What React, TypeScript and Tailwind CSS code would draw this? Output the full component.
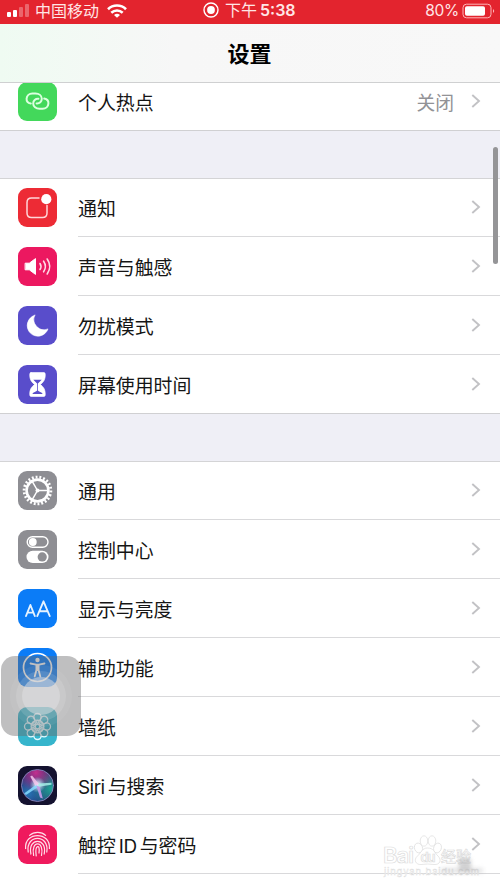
import type { ReactNode } from 'react'

// Icon tiles, all drawn on a 39x39 grid

function Tile({ className, children }: { className: string; children: ReactNode }) {
  return (
    <div className={`w-[39px] h-[39px] rounded-[9px] overflow-hidden flex-shrink-0 ${className}`}>
      <svg viewBox="0 0 39 39" className="w-full h-full" fill="none" stroke="white" strokeLinecap="round" strokeLinejoin="round">
        {children}
      </svg>
    </div>
  )
}

function HotspotIcon() {
  return (
    <Tile className="bg-[#43d85b]">
      <g stroke="#dcffe0" strokeWidth="2">
        <path d="M12.8 21.6 C10 21 8.4 19 8.6 16.6 C8.8 13.6 11.2 11.4 14.4 11.4 H17.5 C21 11.4 23.8 13.6 23.8 16.8 C23.8 19.6 21.6 21.6 18.6 21.4" />
        <path d="M26.2 16.6 C29 17.2 30.6 19.2 30.4 21.6 C30.2 24.6 27.8 26.8 24.6 26.8 H21.5 C18 26.8 15.2 24.6 15.2 21.4 C15.2 18.6 17.4 16.6 20.4 16.8" />
      </g>
    </Tile>
  )
}

function NotificationIcon() {
  return (
    <Tile className="bg-[#ed2b35]">
      <path d="M21 10 H13.5 Q9 10 9 14.5 V25 Q9 29.5 13.5 29.5 H24.5 Q29 29.5 29 25 V17.5" stroke="#ffd6d8" strokeWidth="1.5" />
      <circle cx="28.3" cy="11.2" r="5.1" fill="white" stroke="none" />
    </Tile>
  )
}

function SoundIcon() {
  return (
    <Tile className="bg-[#ec1860]">
      <path d="M7.5 16.2 H11.3 L17.5 11.6 V27.4 L11.3 22.8 H7.5 Z" fill="white" strokeWidth="1" />
      <g stroke="#ffd9e5" strokeWidth="1.6">
        <path d="M22 16.5 Q24 19.5 22 22.5" />
        <path d="M25.6 14.2 Q29.2 19.5 25.6 24.8" />
        <path d="M29.2 12 Q34.3 19.5 29.2 27" />
      </g>
    </Tile>
  )
}

function MoonIcon() {
  return (
    <Tile className="bg-[#594dcb]">
      <path d="M16.8 9.2 A10.7 10.7 0 1 0 30 22.9 A10.2 10.2 0 0 1 16.8 9.2 Z" fill="white" strokeWidth=".6" />
    </Tile>
  )
}

function HourglassIcon() {
  return (
    <Tile className="bg-[#594dcb]">
      <path d="M13 7.5 H26 Q27.3 7.5 27.3 9.5 C27.3 14.5 26 16.5 22.5 19.5 C26 22.5 27.3 24.5 27.3 29.5 Q27.3 31.5 26 31.5 H13 Q11.7 31.5 11.7 29.5 C11.7 24.5 13 22.5 16.5 19.5 C13 16.5 11.7 14.5 11.7 9.5 Q11.7 7.5 13 7.5 Z" fill="white" strokeWidth=".6" />
      <path d="M15.3 14.7 H23.7 L19.9 18.6 V25.5 C20.5 26.5 24 27.2 24.7 28.9 H14.3 C15 27.2 18.5 26.5 19.1 25.5 V18.6 Z" fill="#594dcb" stroke="none" />
    </Tile>
  )
}

function GearIcon() {
  return (
    <Tile className="bg-[#8e8e93]">
      <circle cx="19.5" cy="19.5" r="13.4" strokeWidth="2.8" strokeLinecap="butt" pathLength="88" strokeDasharray="2 2" />
      <circle cx="19.5" cy="19.5" r="10.9" strokeWidth="2.6" />
      <circle cx="19.5" cy="19.5" r="2" fill="white" stroke="none" />
      <path d="M19.5 19.5 H30 M19.5 19.5 L14.4 10.6 M19.5 19.5 L14.4 28.4" strokeWidth="1.5" />
    </Tile>
  )
}

function ControlCenterIcon() {
  return (
    <Tile className="bg-[#8e8e93]">
      <rect x="9.2" y="6.7" width="20.8" height="10.6" rx="5.3" strokeWidth="1.4" />
      <circle cx="14.8" cy="12" r="3.9" fill="white" stroke="none" />
      <rect x="8.5" y="20.7" width="22" height="12.4" rx="6.2" fill="white" stroke="none" />
      <circle cx="24.2" cy="26.9" r="4.6" fill="#8e8e93" stroke="none" />
    </Tile>
  )
}

function DisplayIcon() {
  return (
    <Tile className="bg-[#0b7cf7]">
      <g stroke="#e6f3ff" strokeWidth="1.9">
        <path d="M8 27 L12.4 16 L16.8 27 M9.5 23.6 H15.3" />
        <path d="M19.3 27 L25.5 12.3 L31.7 27 M21.3 22.2 H29.7" />
      </g>
    </Tile>
  )
}

function AccessibilityIcon() {
  return (
    <Tile className="bg-[#0b7cf7]">
      <circle cx="19.5" cy="19.5" r="14" strokeWidth="1.7" />
      <circle cx="19.5" cy="12" r="2.2" fill="white" stroke="none" />
      <path d="M12.5 15.5 L18 16.6 H21 L26.5 15.5 M18.4 17 H20.6 V22 L22.3 28.5 M18.4 17 V22 L16.7 28.5 M19.5 17 V22" strokeWidth="1.8" />
    </Tile>
  )
}

function WallpaperIcon() {
  return (
    <Tile className="bg-[#36b5cc]">
      <g stroke="#e2faff" strokeWidth="1.3">
        {[...Array(8)].map((_, i) => (
          <g key={i} transform={`rotate(${i * 45} 19.5 19.5)`}>
            <circle cx="19.5" cy="10.2" r="3.7" />
            <path d="M19.5 17.2 L17.7 13.6 M19.5 17.2 L21.3 13.6" />
          </g>
        ))}
        <circle cx="19.5" cy="19.5" r="2.3" />
        <circle cx="19.5" cy="19.5" r="6.4" />
      </g>
    </Tile>
  )
}

function SiriIcon() {
  return (
    <Tile className="bg-[#14122f]">
      <defs>
        <radialGradient id="siri-pink" cx=".45" cy=".1" r=".6">
          <stop offset="0" stopColor="#c2308f" />
          <stop offset="1" stopColor="#c2308f" stopOpacity="0" />
        </radialGradient>
        <radialGradient id="siri-teal" cx=".95" cy=".6" r=".65">
          <stop offset="0" stopColor="#1fa898" />
          <stop offset="1" stopColor="#1fa898" stopOpacity="0" />
        </radialGradient>
        <radialGradient id="siri-blue" cx=".2" cy=".75" r=".7">
          <stop offset="0" stopColor="#2579b8" />
          <stop offset="1" stopColor="#33409a" stopOpacity=".5" />
        </radialGradient>
        <radialGradient id="siri-glow">
          <stop offset="0" stopColor="white" />
          <stop offset=".35" stopColor="#d8f4ff" stopOpacity=".7" />
          <stop offset="1" stopColor="#8edcf0" stopOpacity="0" />
        </radialGradient>
      </defs>
      <g stroke="none">
        <circle cx="19.5" cy="19.5" r="15.8" fill="url(#siri-blue)" />
        <circle cx="19.5" cy="19.5" r="15.8" fill="url(#siri-teal)" />
        <circle cx="19.5" cy="19.5" r="15.8" fill="url(#siri-pink)" />
        <circle cx="19.5" cy="18.8" r="8" fill="url(#siri-glow)" />
        <path d="M19 18 L6 27.5 L8 29 L20 21 Z" fill="#86dcff" fillOpacity=".85" />
        <path d="M18.5 20 L21.5 20 L24.8 32.5 L22 31.5 Z" fill="#c59bea" fillOpacity=".9" />
        <path d="M20 17.6 L33.5 16.8 L33.5 18.8 L20.5 20.8 Z" fill="#a5efe8" fillOpacity=".85" />
        <path d="M17.5 20 L12.2 10.5 L14 9.5 L21 18 Z" fill="#f3c6ec" fillOpacity=".85" />
      </g>
      <circle cx="19.5" cy="19.5" r="16" stroke="#8a86c0" strokeWidth=".9" />
    </Tile>
  )
}

function TouchIdIcon() {
  return (
    <Tile className="bg-[#ef1a5d]">
      <g stroke="#ffdce7" strokeWidth="1.25">
        <path d="M11.6 10.4 C16 6.4 23.5 6.4 27.6 10.4" />
        <path d="M7.6 23.5 C6.2 6.2 32.8 6.2 31.4 23.5" />
        <path d="M10.2 27 C7.4 8.8 31.6 8.8 28.8 27" />
        <path d="M12.9 29 C9.4 12 29.6 12 26.2 29" />
        <path d="M15.6 30.3 C12.4 15 26.8 15 23.5 30.3" />
        <path d="M18.2 30.8 C16.6 19 22.6 19 21 28" />
      </g>
    </Tile>
  )
}

function Chevron() {
  return (
    <svg viewBox="0 0 10 14" className="w-[10px] h-[14px]" fill="none" stroke="#c2c2c5" strokeWidth="1.9">
      <path d="M1.3 1 L8 7 L1.3 13" />
    </svg>
  )
}

type RowProps = { icon: ReactNode; label: ReactNode; value?: string; last?: boolean }

function Row({ icon, label, value, last }: RowProps) {
  return (
    <div className={`h-[59px] flex-shrink-0 flex pl-[18px] ${last ? 'border-b border-[#d0d0d2]' : ''}`}>
      <div className="w-[60px] flex-shrink-0 pt-[10px]">{icon}</div>
      <div className={`flex-1 flex items-center pr-[19px] ${last ? '' : 'border-b border-[#d9d9db]'}`}>
        <span className="flex-1 flex items-center text-[18.9px] leading-none text-[#151515] pt-[6px]">{label}</span>
        {value && <span className="text-[18.8px] leading-none text-[#929296] mr-[17px] pt-[6px]">{value}</span>}
        <Chevron />
      </div>
    </div>
  )
}

function StatusBar() {
  return (
    <header className="relative z-10 h-6 flex-shrink-0 bg-[#e3242e] text-[#ffe5e5] flex items-center justify-between pl-[7px] pr-[5px] pb-[3px]">
      <div className="flex items-center">
        <div className="flex items-end gap-[2px] h-[13px] mr-[6px]">
          <i className="w-[4px] h-[5px] rounded-[1px] bg-white" />
          <i className="w-[4px] h-[7px] rounded-[1px] bg-white" />
          <i className="w-[4px] h-[10px] rounded-[1px] bg-white/30" />
          <i className="w-[4px] h-[13px] rounded-[1px] bg-white/30" />
        </div>
        <span className="text-[16px] leading-none">中国移动</span>
        <svg viewBox="0 0 20 14" className="w-5 h-[14px] ml-[8px]" fill="none" stroke="white" strokeWidth="2.6">
          <path d="M1 5.2 C6 .3 14 .3 19 5.2" />
          <path d="M4.3 8.8 C7.6 5.8 12.4 5.8 15.7 8.8" />
          <path d="M7 10.9 Q10 8.5 13 10.9 L10 13.8 Z" fill="white" stroke="none" />
        </svg>
      </div>
      <div className="absolute left-[203px] top-[2px] flex items-center h-4">
        <svg viewBox="0 0 16 16" className="w-4 h-4 mr-[6px]">
          <circle cx="8" cy="8" r="7" fill="none" stroke="white" strokeWidth="1.4" />
          <circle cx="8" cy="8" r="3.9" fill="white" />
        </svg>
        <span className="text-[16px] leading-none whitespace-nowrap">
          下午<span className="ml-[3px] font-semibold">5:38</span>
        </span>
      </div>
      <div className="flex items-center">
        <span className="text-[15.5px] leading-none mr-[3px] tracking-[-0.3px] pt-px">80%</span>
        <svg viewBox="0 0 33 16" className="w-[33px] h-4">
          <rect x="1" y="1.2" width="28" height="13.6" rx="3.5" fill="none" stroke="#ffb5b7" strokeWidth="1" />
          <rect x="3" y="3.2" width="20" height="9.6" rx="1.8" fill="white" />
          <path d="M31 6 Q33.4 8 31 10 Z" fill="#ffb5b7" />
        </svg>
      </div>
    </header>
  )
}

function AssistiveTouch() {
  return (
    <div className="absolute left-[1px] top-[656px] w-[80px] h-[80px] rounded-[14px] bg-[#67676a]/42 flex items-center justify-center">
      <div className="w-[62px] h-[62px] rounded-full bg-white/6 flex items-center justify-center">
        <div className="w-[50px] h-[50px] rounded-full bg-white/12 flex items-center justify-center">
          <div className="w-[38px] h-[38px] rounded-full bg-[#e2e2e3]/50" />
        </div>
      </div>
    </div>
  )
}

function Watermark() {
  return (
    <div className="absolute left-[383px] top-[834px] w-[110px] h-[45px]">
      <svg viewBox="0 0 110 45" className="w-full h-full" fill="white" stroke="#dcdcdc" strokeWidth=".7">
        <text x="0" y="29" fontSize="22" fontWeight="600" fontFamily="Inter, sans-serif" textLength="31">Bai</text>
        <ellipse cx="35.5" cy="14" rx="4" ry="5" transform="rotate(-20 35.5 14)" />
        <ellipse cx="41" cy="7" rx="3.8" ry="5.2" />
        <ellipse cx="49" cy="7" rx="3.8" ry="5.2" />
        <ellipse cx="54.5" cy="14" rx="3.8" ry="5" transform="rotate(20 54.5 14)" />
        <path d="M44.5 14 C39 14 38 19 34.5 22 C30 26 33 31 38 30.5 Q45 29.5 51 30.5 C57 31 59 26 55 22 C51 18.5 51 14 44.5 14 Z" />
        <text x="37.5" y="28" fontSize="13" fontWeight="600" fontFamily="Inter, sans-serif" textLength="15">du</text>
        <text x="58" y="28" fontSize="15" fontWeight="500" fontFamily="'Noto Sans CJK SC', sans-serif" textLength="30">经验</text>
        <text x="1" y="41" fontSize="9.5" fontFamily="Inter, sans-serif" textLength="95" strokeWidth=".4">jingyan.baidu.com</text>
      </svg>
      <div className="absolute left-[76px] top-[25px] w-[12px] h-[12px] bg-[#aaaaac]/50 blur-[2px]" />
      <div className="absolute left-[58px] top-[34px] w-[42px] h-[5px] bg-[#aaaaac]/30 blur-[2px]" />
    </div>
  )
}

export default function App() {
  return (
    <div className="relative w-[500px] h-[879px] overflow-hidden bg-white flex flex-col font-[Inter,'Noto_Sans_CJK_SC',sans-serif]">
      <StatusBar />
      <div className="relative z-10 h-[59px] flex-shrink-0 flex items-center justify-center border-b border-[#cfd0d1] bg-linear-to-r from-[#effbf2] via-[#f7f7f7] via-35% to-[#f8f8f8]">
        <h1 className="text-[22px] leading-none font-semibold text-black pt-px pr-px">设置</h1>
      </div>

      <section className="-mt-[11px] flex-shrink-0">
        <Row icon={<HotspotIcon />} label="个人热点" value="关闭" last />
      </section>

      <div className="h-[47px] flex-shrink-0 bg-[#efeff6]" />
      <section className="flex-shrink-0 shadow-[inset_0_1px_0_#d4d4d6]">
        <Row icon={<NotificationIcon />} label="通知" />
        <Row icon={<SoundIcon />} label="声音与触感" />
        <Row icon={<MoonIcon />} label="勿扰模式" />
        <Row icon={<HourglassIcon />} label="屏幕使用时间" last />
      </section>

      <div className="h-[47px] flex-shrink-0 bg-[#efeff6]" />
      <section className="flex-shrink-0 shadow-[inset_0_1px_0_#d4d4d6]">
        <Row icon={<GearIcon />} label="通用" />
        <Row icon={<ControlCenterIcon />} label="控制中心" />
        <Row icon={<DisplayIcon />} label="显示与亮度" />
        <Row icon={<AccessibilityIcon />} label="辅助功能" />
        <Row icon={<WallpaperIcon />} label="墙纸" />
        <Row icon={<SiriIcon />} label={<><span className="tracking-[-0.5px] mr-[3px]">Siri</span>与搜索</>} />
        <Row icon={<TouchIdIcon />} label={<>触控<span className="mx-[3px] tracking-[-0.4px]">ID</span>与密码</>} />
      </section>

      {/* Scroll indicator */}
      <div className="absolute left-[493px] top-[147px] w-[5px] h-[117px] rounded-full bg-[#959597]" />
      <AssistiveTouch />
      <Watermark />
    </div>
  )
}
